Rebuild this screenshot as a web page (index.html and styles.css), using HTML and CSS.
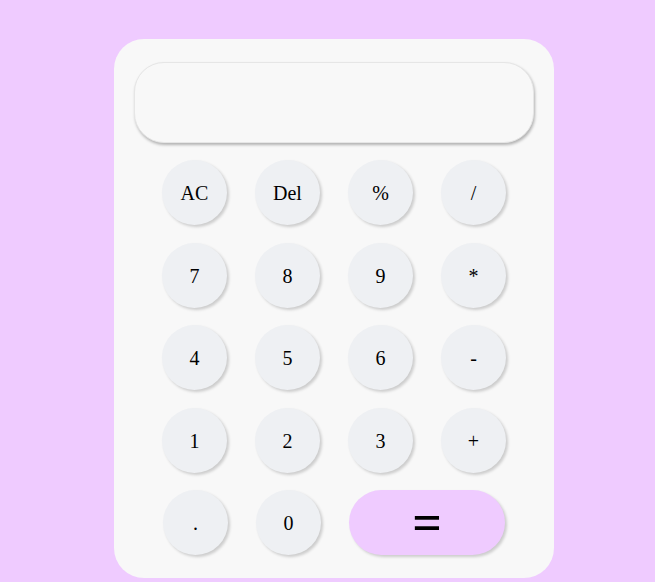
FILE: index.html
```html
<!DOCTYPE html>
<html>
<head>
<meta charset="utf-8">
<link rel="stylesheet" href="styles.css">
</head>
<body>
<div class="calc">
  <div class="display"></div>
  <div class="keys">
    <button class="key">AC</button>
    <button class="key">Del</button>
    <button class="key">%</button>
    <button class="key">/</button>
    <button class="key">7</button>
    <button class="key">8</button>
    <button class="key">9</button>
    <button class="key">*</button>
    <button class="key">4</button>
    <button class="key">5</button>
    <button class="key">6</button>
    <button class="key">-</button>
    <button class="key">1</button>
    <button class="key">2</button>
    <button class="key">3</button>
    <button class="key">+</button>
  </div>
  <div class="last-row">
    <button class="key">.</button>
    <button class="key">0</button>
    <button class="key equal">=</button>
  </div>
</div>
</body>
</html>
```
FILE: styles.css
```css
html, body {
  margin: 0;
  padding: 0;
}
body {
  background: #efcbff;
  height: 582px;
  overflow: hidden;
  font-family: "Liberation Serif", serif;
}
.calc {
  margin: 39px 0 0 114px;
  width: 440px;
  height: 539px;
  box-sizing: border-box;
  background: #f8f8f8;
  border-radius: 30px;
  padding: 23px 20px 0 20px;
}
.display {
  height: 81px;
  border-radius: 30px;
  background: #f8f8f8;
  border: 1px solid #e6e6e6;
  box-sizing: border-box;
  box-shadow: 1px 2px 3px rgba(0,0,0,0.28);
}
.keys {
  display: grid;
  grid-template-columns: repeat(4, 65px);
  column-gap: 28px;
  row-gap: 17.5px;
  margin: 17px 0 0 28px;
}
.key {
  width: 65px;
  height: 65px;
  border: none;
  border-radius: 50%;
  background: #eef0f3;
  box-shadow: 2px 2px 3px rgba(0,0,0,0.18);
  font-family: "Liberation Serif", serif;
  font-size: 20px;
  color: #000;
  padding: 2px 0 0 0;
}
.last-row {
  display: flex;
  gap: 28px;
  margin: 17px 0 0 29px;
}
.equal {
  width: 156px;
  border-radius: 33px;
  background: #efcbff;
  font-size: 52px;
  font-weight: 700;
  line-height: 1;
}
```
